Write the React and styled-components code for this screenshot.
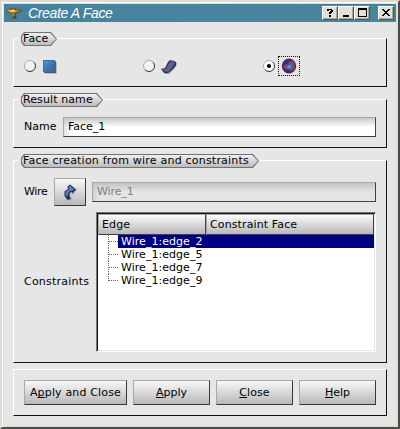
import React from "react";
import styled, { createGlobalStyle, css } from "styled-components";

const Global = createGlobalStyle`
  * { box-sizing: border-box; }
  body { margin: 0; background: #e6e6e6; }
`;

const Window = styled.div`
  width: 400px;
  height: 429px;
  display: flex;
  flex-direction: column;
  background: #e6e6e6;
  border: 2px solid;
  border-color: #dedbd2 #4b4b49 #4b4b49 #dedbd2;
  box-shadow: inset 1px 1px 0 #fff, inset -2px -2px 0 #dfdfd6, inset 2px 2px 0 #e2ded4;
  padding: 2px 2px 0;
  font: 11px/13px "DejaVu Sans", sans-serif;
  color: #000;
  white-space: nowrap;
`;

const TitleBar = styled.header`
  height: 18px;
  flex: none;
  display: flex;
  align-items: center;
  padding-left: 2px;
  background: linear-gradient(90deg, #45829f, #48869c);
`;

const Title = styled.h1`
  margin: 0 auto 0 5px;
  font: italic 14px/17px "Liberation Sans", sans-serif;
  letter-spacing: ${(p) => p.$spacing}px;
  color: #fff;
`;

const WindowButton = styled.button`
  width: 16px;
  height: 14px;
  padding: 0;
  display: flex;
  background: #e2dfd8;
  border: 1px solid;
  border-color: #fff #555 #555 #fff;
  box-shadow: inset -1px -1px 0 #aaa89f;
  margin-right: ${(p) => p.$gap || 0}px;
`;

const Body = styled.main`
  display: flex;
  flex-direction: column;
  padding: 16px 9px 0;
`;

const Group = styled.section`
  height: ${(p) => p.$height}px;
  margin-bottom: ${(p) => p.$after}px;
  border: 1px solid;
  border-color: #fff #111 #111 #fff;
  padding: 0 10px;
`;

const TagHolder = styled.div`
  width: max-content;
  margin: -7px 0 0 -5px;
  padding-left: 2px;
  background: #e6e6e6;
`;

const tagShape = css`
  clip-path: polygon(3px 0, calc(100% - 6px) 0, 100% 50%, calc(100% - 6px) 100%, 3px 100%, 0 calc(100% - 4px), 0 4px);
`;

const Tag = styled.div`
  ${tagShape}
  width: ${(p) => p.$width}px;
  height: 14px;
  padding: 1px;
  background: #727272;
`;

const TagFace = styled.h2`
  ${tagShape}
  margin: 0;
  height: 12px;
  padding-left: 1px;
  font: inherit;
  line-height: 11px;
  letter-spacing: ${(p) => p.$spacing}px;
  background: linear-gradient(#f0f0f0, #bcbcbc);
`;

const Choices = styled.div`
  display: grid;
  grid-template-columns: 119px 120px 1fr;
  height: 20px;
  margin-top: 10px;
`;

const Choice = styled.label`
  display: flex;
  align-items: center;
  gap: ${(p) => p.$gap}px;
`;

const IconFrame = styled.span`
  display: flex;
  align-items: center;
  justify-content: center;
  width: 22px;
  height: 20px;
  border: 1px ${(p) => (p.$focus ? "dotted #111" : "solid transparent")};
`;

const Row = styled.div`
  display: flex;
  align-items: center;
  height: ${(p) => p.$height}px;
  margin-top: ${(p) => p.$top}px;
`;

const Label = styled.span`
  width: ${(p) => p.$width}px;
  flex: none;
  padding-bottom: 1px;
  letter-spacing: ${(p) => p.$spacing}px;
`;

const Input = styled.input`
  flex: 1;
  min-width: 0;
  height: 20px;
  padding: 0 4px 2px;
  border: 1px solid;
  border-color: #a8a8a8 #404040 #404040 #a8a8a8;
  border-radius: 0;
  font: inherit;
  letter-spacing: ${(p) => p.$spacing}px;
  color: #000;
  background: linear-gradient(90deg, #c8c8c888, transparent 7px),
    linear-gradient(#c8c8c8, #fff 9px);
  &:disabled {
    color: #808080;
    background: linear-gradient(90deg, #c4c4c488, transparent 7px),
      linear-gradient(#c4c4c4, #e4e4e4 9px);
  }
`;

const Button = styled.button`
  width: ${(p) => p.$width}px;
  height: ${(p) => p.$height || 25}px;
  flex: none;
  display: flex;
  align-items: center;
  justify-content: center;
  padding: 0 0 1px;
  border: 1px solid;
  border-color: #a8a8a8 #383838 #383838 #a8a8a8;
  background: linear-gradient(#f8f8f8, #b8b8b8);
  font: inherit;
  letter-spacing: ${(p) => p.$spacing || 0}px;
  color: #000;
  margin-right: 6px;
  &:last-child { margin-right: 0; }
`;

const Key = styled.span`
  text-decoration: underline;
  text-underline-offset: 1px;
  text-decoration-skip-ink: none;
`;

const Table = styled.div`
  flex: 1;
  height: 140px;
  border: 1px solid;
  border-color: #777 #fff #fff #777;
  background: #fff;
  box-shadow: inset 1px 1px 0 #111, inset -1px -1px 0 #e6e6e6;
  padding: 1px;
`;

const HeaderRow = styled.div`
  display: grid;
  grid-template-columns: 108px 1fr;
  height: 21px;
`;

const HeaderCell = styled.div`
  padding: 3px 0 0 3px;
  letter-spacing: ${(p) => p.$spacing}px;
  border: 1px solid;
  border-color: #a8a8a8 #404040 #404040 #a8a8a8;
  background: linear-gradient(#fafafa, #b8b8b8);
`;

const Item = styled.div`
  display: flex;
  height: 13px;
  padding-left: 10px;
`;

const Branch = styled.svg`
  width: 10px;
  height: 13px;
  flex: none;
`;

const ItemText = styled.span`
  flex: 1;
  padding-left: 3px;
  line-height: 14px;
  letter-spacing: ${(p) => p.$spacing}px;
  color: ${(p) => (p.$selected ? "#fff" : "#000")};
  background: ${(p) => (p.$selected ? "#000080" : "transparent")};
`;

const GroupTag = ({ width, spacing, children }) => (
  <TagHolder><Tag $width={width}><TagFace $spacing={spacing}>{children}</TagFace></Tag></TagHolder>
);

const Radio = ({ checked }) => (
  <svg width="12" height="12" viewBox="0 0 12 12">
    <circle cx="6" cy="6" r="5.5" fill={checked ? "#fff" : "#f2f2f2"} />
    <path d="M2.1 9.9A5.5 5.5 0 0 1 9.9 2.1" fill="none" stroke="#aaa" />
    <path d="M9.9 2.1A5.5 5.5 0 0 1 2.1 9.9" fill="none" stroke="#333" />
    {checked && <circle cx="6" cy="6" r="2.1" />}
  </svg>
);

const Lamp = () => (
  <svg width="17" height="14" viewBox="0 0 17 14">
    <path d="M0 4L4 3L5 2H9L11 4L16 3V5L11 8L9 9V11L11 13H4L7 11V9L3 7L0 5Z" fill="#75581a" />
    <path d="M1 4L5 4L7 3L10 5L14 4L10 6L4 6Z" fill="#e9c45e" />
    <path d="M4 6L8 7L7 10" stroke="#c9972c" fill="none" />
    <path d="M9 8L10 7L9 10L11 12H8" fill="#46340f" />
  </svg>
);

const SquareIcon = () => (
  <svg width="16" height="16" viewBox="0 0 16 16">
    <defs><linearGradient id="square" x2="1" y2="1"><stop stopColor="#5b8fc9" /><stop offset=".5" stopColor="#3a79bb" /><stop offset="1" stopColor="#2c639f" /></linearGradient></defs>
    <path d="M2 4H14V16H2Z" fill="#bbb" />
    <path d="M1 3H13V15H1Z" fill="#555c66" />
    <path d="M0 2H12V14H0Z" fill="#4a6d96" />
    <path d="M1 3H11V13H1Z" fill="url(#square)" />
  </svg>
);

const SheetIcon = () => (
  <svg width="16" height="16" viewBox="0 0 16 16">
    <path d="M2 12L6 9L9 4L12 2L16 5L15 9L11 13L8 16L4 16Z" fill="#666" opacity=".6" />
    <path d="M0 11L4 10L7 4L9 2L15 4L15 7L11 12L7 15L3 15Z" fill="#28344a" />
    <path d="M1 11L5 11L8 5L10 3L14 5L10 11L7 14L3 13Z" fill="#3872b0" />
    <path d="M5.5 12L6 9L9 5H11L10 9L7.5 12Z" fill="none" stroke="#d62a50" strokeWidth=".9" />
  </svg>
);

const SphereIcon = () => (
  <svg width="16" height="16" viewBox="0 0 16 16">
    <defs><radialGradient id="blue"><stop stopColor="#79a9cc" /><stop offset="1" stopColor="#346b9d" /></radialGradient></defs>
    <ellipse cx="8" cy="8" rx="7.2" ry="7.6" fill="#382c72" />
    <path d="M2.5 9L3 7.5L7 6L9 3.5L12 3L13.5 6V10L12 12.5L7 11.5L3 10.5Z" fill="#365f98" stroke="#d81e36" strokeWidth=".9" />
    <path d="M4 9L9 7L11.5 4V12L8 10.5Z" fill="url(#blue)" />
  </svg>
);

const SelectArrow = () => (
  <svg width="16" height="18" viewBox="0 0 16 18">
    <path d="M7 18L4 14V9L7 6.5L6 5L9 2L15 7L11 12L10 10L8 12V14L10 16Z" fill="#777" opacity=".5" />
    <path d="M5.5 17L2.5 13V8.5L6.5 5.5L5 4L8 1.5L14 6.5L10 10.5V8.5L7.5 10V13L9 15.5Z" fill="#242f5c" />
    <path d="M5 14L3.7 12V9L7.5 6L6.5 4L8 2.8L12.3 6.5L11 7.3L7.5 8.2L6 10.5Z" fill="#607ec4" />
  </svg>
);

const glyphs = {
  help: <path d="M4 2h5v1h1v2H9v1H8v1H6V5h1V4h1V3H6v1H4zM6 8h2v2H6z" />,
  minimize: <path d="M4 8h6v2H4z" />,
  maximize: <path fillRule="evenodd" d="M3 1h9v9H3zM4 3v6h7V3z" />,
  close: <path d="M3 2h2v1h1v1h2V3h1V2h2v1h-1v1H9v1H8v1h1v1h1v1h1v1H9V8H8V7H6v1H5v1H3V8h1V7h1V6h1V5H5V4H4V3H3z" />,
};

const Control = ({ name, gap }) => (
  <WindowButton $gap={gap} aria-label={name}>
    <svg width="14" height="12" viewBox="0 0 14 12">{glyphs[name]}</svg>
  </WindowButton>
);

const edges = ["Wire_1:edge_2", "Wire_1:edge_5", "Wire_1:edge_7", "Wire_1:edge_9"];

export default function App() {
  return (
    <>
      <Global />
      <Window>
        <TitleBar>
          <Lamp />
          <Title $spacing={-0.36}>Create A Face</Title>
          <Control name="help" />
          <Control name="minimize" />
          <Control name="maximize" gap={8} />
          <Control name="close" gap={2} />
        </TitleBar>
        <Body>
          <Group $height={49} $after={12}>
            <GroupTag width={36} spacing={0.1}>Face</GroupTag>
            <Choices>
              <Choice $gap={4}><Radio /><IconFrame><SquareIcon /></IconFrame></Choice>
              <Choice $gap={3}><Radio /><IconFrame><SheetIcon /></IconFrame></Choice>
              <Choice $gap={3}><Radio checked /><IconFrame $focus><SphereIcon /></IconFrame></Choice>
            </Choices>
          </Group>
          <Group $height={49} $after={12}>
            <GroupTag width={82} spacing={0.1}>Result name</GroupTag>
            <Row $height={20} $top={10}>
              <Label $width={39} $spacing={0}>Name</Label>
              <Input $spacing={0} defaultValue="Face_1" />
            </Row>
          </Group>
          <Group $height={203} $after={6}>
            <GroupTag width={238} spacing={0.21}>Face creation from wire and constraints</GroupTag>
            <Row $height={28} $top={10}>
              <Label $width={30} $spacing={-0.3}>Wire</Label>
              <Button $width={32} $height={28} aria-label="Select wire"><SelectArrow /></Button>
              <Input $spacing={-0.1} defaultValue="Wire_1" disabled />
            </Row>
            <Row $height={140} $top={6}>
              <Label $width={72} $spacing={0.22}>Constraints</Label>
              <Table>
                <HeaderRow>
                  <HeaderCell $spacing={0.1}>Edge</HeaderCell>
                  <HeaderCell $spacing={0.12}>Constraint Face</HeaderCell>
                </HeaderRow>
                {edges.map((edge, i) => (
                  <Item key={edge}>
                    <Branch viewBox="0 0 10 13">
                      <path d={i === 3 ? "M.5 0V7M1 6.5H10" : "M.5 0V13M1 6.5H10"} stroke="#666" strokeDasharray="1 1" fill="none" />
                    </Branch>
                    <ItemText $selected={i === 0} $spacing={0.04}>{edge}</ItemText>
                  </Item>
                ))}
              </Table>
            </Row>
          </Group>
          <Group $height={47} $after={0}>
            <Row $height={25} $top={10}>
              <Button $width={103} $spacing={0.16}><span>A<Key>p</Key>ply and Close</span></Button>
              <Button $width={77}><span><Key>A</Key>pply</span></Button>
              <Button $width={77} $spacing={0.1}><span><Key>C</Key>lose</span></Button>
              <Button $width={77}><span><Key>H</Key>elp</span></Button>
            </Row>
          </Group>
        </Body>
      </Window>
    </>
  );
}
